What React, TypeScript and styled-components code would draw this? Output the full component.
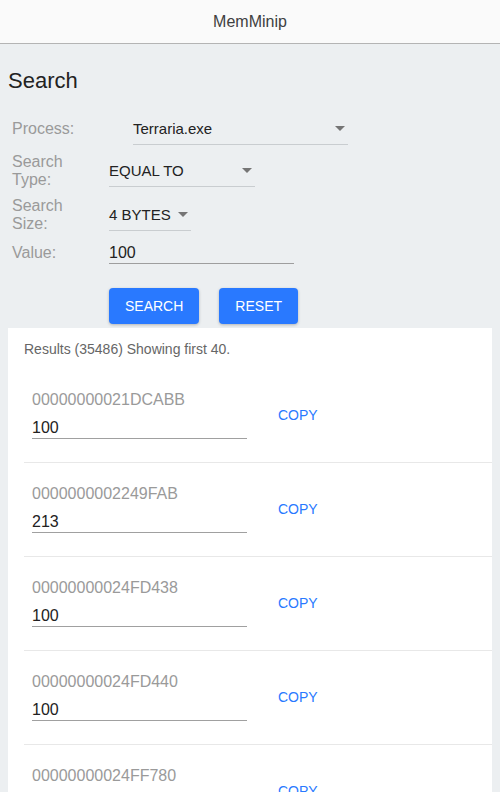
import React from 'react'
import styled, { createGlobalStyle } from 'styled-components'

const GlobalStyle = createGlobalStyle`
  body {
    margin: 0;
    background: #eceff1;
    font-family: "Liberation Sans", Arial, sans-serif;
  }
`

const Header = styled.header`
  height: 43px;
  border-bottom: 1px solid #b4b4b4;
  background: #fafafa;
  display: flex;
  align-items: center;
  justify-content: center;
  font-size: 16px;
  color: #404040;
`

const Main = styled.main`
  padding: 0 8px;
`

const Heading = styled.h1`
  margin: 24px 0 0;
  font-size: 22px;
  line-height: 26px;
  font-weight: normal;
  color: #222;
`

const Form = styled.div`
  margin-top: 19px;
  display: flex;
  flex-direction: column;
  gap: 8px;
`

const FormRow = styled.div`
  display: grid;
  grid-template-columns: 97px auto;
  align-items: center;
  padding-left: 4px;
`

const Label = styled.div`
  font-size: 16px;
  line-height: 18px;
  color: #9a9a9a;
  width: 70px;
`

const Select = styled.div<{ $width: number; $offset?: number }>`
  width: ${p => p.$width}px;
  margin-left: ${p => p.$offset || 0}px;
  display: flex;
  align-items: center;
  justify-content: space-between;
  padding: 6px 0;
  border-bottom: 1px solid #c9cdd0;
  font-size: 15px;
  line-height: 19px;
  color: #222;
`

const Arrow = styled.span`
  width: 0;
  height: 0;
  margin-right: 3px;
  border-left: 5px solid transparent;
  border-right: 5px solid transparent;
  border-top: 5px solid #757575;
`

const Input = styled.div<{ $width: number }>`
  width: ${p => p.$width}px;
  padding: 2px 0 1px;
  border-bottom: 1px solid #9e9e9e;
  font-size: 16px;
  line-height: 19px;
  color: #222;
`

const Actions = styled.div`
  display: flex;
  gap: 20px;
  margin: 24px 0 4px 101px;
`

const Button = styled.button`
  height: 36px;
  padding: 0 16px;
  border: none;
  border-radius: 4px;
  background: #2979ff;
  color: #fff;
  font-family: inherit;
  font-size: 14px;
  text-transform: uppercase;
  box-shadow: 0 1px 3px rgba(0, 0, 0, 0.25);
`

const Panel = styled.section`
  background: #fff;
  padding: 13px 0 0 16px;
`

const Summary = styled.div`
  font-size: 14px;
  line-height: 16px;
  color: #666;
`

const ResultRow = styled.div`
  display: flex;
  align-items: center;
  margin-top: 12px;
  padding: 21px 0 23px 8px;
  border-bottom: 1px solid #e8e8e8;
  & + & {
    margin-top: 0;
  }
`

const Field = styled.div`
  width: 215px;
  display: flex;
  flex-direction: column;
  gap: 9px;
`

const Address = styled.div`
  font-size: 16px;
  line-height: 19px;
  color: #9a9a9a;
`

const Value = styled.div`
  padding-bottom: 1px;
  border-bottom: 1px solid #a0a0a0;
  font-size: 16px;
  line-height: 19px;
  color: #222;
`

const CopyButton = styled.span`
  margin-left: 31px;
  font-size: 14px;
  color: #2979ff;
`

const results = [
  { address: '00000000021DCABB', value: '100' },
  { address: '0000000002249FAB', value: '213' },
  { address: '00000000024FD438', value: '100' },
  { address: '00000000024FD440', value: '100' },
  { address: '00000000024FF780', value: '100' },
]

export default function App() {
  return (
    <>
      <GlobalStyle />
      <Header>MemMinip</Header>
      <Main>
        <Heading>Search</Heading>
        <Form>
          <FormRow>
            <Label>Process:</Label>
            <Select $width={215} $offset={24}>
              Terraria.exe
              <Arrow />
            </Select>
          </FormRow>
          <FormRow>
            <Label>Search Type:</Label>
            <Select $width={146}>
              EQUAL TO
              <Arrow />
            </Select>
          </FormRow>
          <FormRow>
            <Label>Search Size:</Label>
            <Select $width={82}>
              4 BYTES
              <Arrow />
            </Select>
          </FormRow>
          <FormRow>
            <Label>Value:</Label>
            <Input $width={185}>100</Input>
          </FormRow>
        </Form>
        <Actions>
          <Button>Search</Button>
          <Button>Reset</Button>
        </Actions>
        <Panel>
          <Summary>Results (35486) Showing first 40.</Summary>
          {results.map(r => (
            <ResultRow key={r.address}>
              <Field>
                <Address>{r.address}</Address>
                <Value>{r.value}</Value>
              </Field>
              <CopyButton>COPY</CopyButton>
            </ResultRow>
          ))}
        </Panel>
      </Main>
    </>
  )
}
